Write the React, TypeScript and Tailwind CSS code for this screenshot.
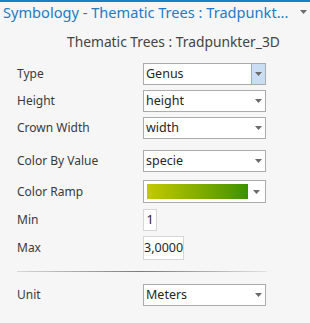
import React from "react";

const font = { fontFamily: '"Noto Sans", "Open Sans", sans-serif' };

function Caret() {
  return (
    <svg viewBox="0 0 7 4" className="h-[4px] w-[7px]">
      <path d="M0 0h7L3.5 4Z" fill="#6b6b6b" />
    </svg>
  );
}

function Select({ value, active = false }: { value: string; active?: boolean }) {
  return (
    <div className="flex h-[22px] w-[123px] items-stretch border border-[#ababab] bg-white">
      <span className="flex-1 truncate pl-[2px] text-[12.5px] leading-[20px] text-[#262626]">
        {value}
      </span>
      <span
        className={`flex w-[14px] items-center justify-center ${
          active ? "border-l border-[#7eb4ea] bg-[#c9def2]" : ""
        }`}
      >
        <Caret />
      </span>
    </div>
  );
}

function Row({
  label,
  children,
  className = "",
}: {
  label: string;
  children: React.ReactNode;
  className?: string;
}) {
  return (
    <div className={`flex items-center ${className}`}>
      <span className="w-[126px] text-[12px] text-[#3a3a3a]">{label}</span>
      {children}
    </div>
  );
}

export default function App() {
  return (
    <div
      style={font}
      className="h-[323px] w-[310px] overflow-hidden border-t-2 border-[#1b7fc6] bg-[#f5f6f5]"
    >
      {/* Pane header */}
      <div className="flex h-[20px] items-center justify-between pl-[3px] pr-[3px]">
        <span className="whitespace-nowrap text-[14.6px] leading-[20px] text-[#1f7bc4]">
          Symbology - Thematic Trees : Tradpunkt...
        </span>
        <Caret />
      </div>

      <div className="mt-[10px] pl-[67px] text-[13.8px] leading-[20px] text-[#444]">
        Thematic Trees : Tradpunkter_3D
      </div>

      <div className="pl-[17px]">
        <Row label="Type" className="mt-[11px]">
          <Select value="Genus" active />
        </Row>
        <Row label="Height" className="mt-[5px]">
          <Select value="height" />
        </Row>
        <Row label="Crown Width" className="mt-[5px]">
          <Select value="width" />
        </Row>
        <Row label="Color By Value" className="mt-[11px]">
          <Select value="specie" />
        </Row>
        <Row label="Color Ramp" className="mt-[8px]">
          <div className="flex h-[23px] w-[123px] items-center border border-[#ababab] bg-white pl-[3px]">
            <div className="h-[15px] w-[101px] bg-gradient-to-r from-[#c3c900] to-[#3a9200]" />
            <span className="flex flex-1 justify-center">
              <Caret />
            </span>
          </div>
        </Row>
        <Row label="Min" className="mt-[6px]">
          <div className="h-[22px] w-[14px] border border-[#d6d6d6] bg-white text-center text-[12.5px] leading-[20px] text-[#262626]">
            1
          </div>
        </Row>
        <Row label="Max" className="mt-[5px]">
          <div className="h-[24px] w-[41px] border border-[#d6d6d6] bg-white text-center text-[12.5px] leading-[22px] text-[#262626]">
            3,0000
          </div>
        </Row>

        <div className="mt-[11px] h-[1px] w-[250px] bg-gradient-to-r from-[#d8d8d8] via-[#7a7a7a] to-[#e2e2e2]" />

        <Row label="Unit" className="mt-[12px]">
          <Select value="Meters" />
        </Row>
      </div>
    </div>
  );
}
